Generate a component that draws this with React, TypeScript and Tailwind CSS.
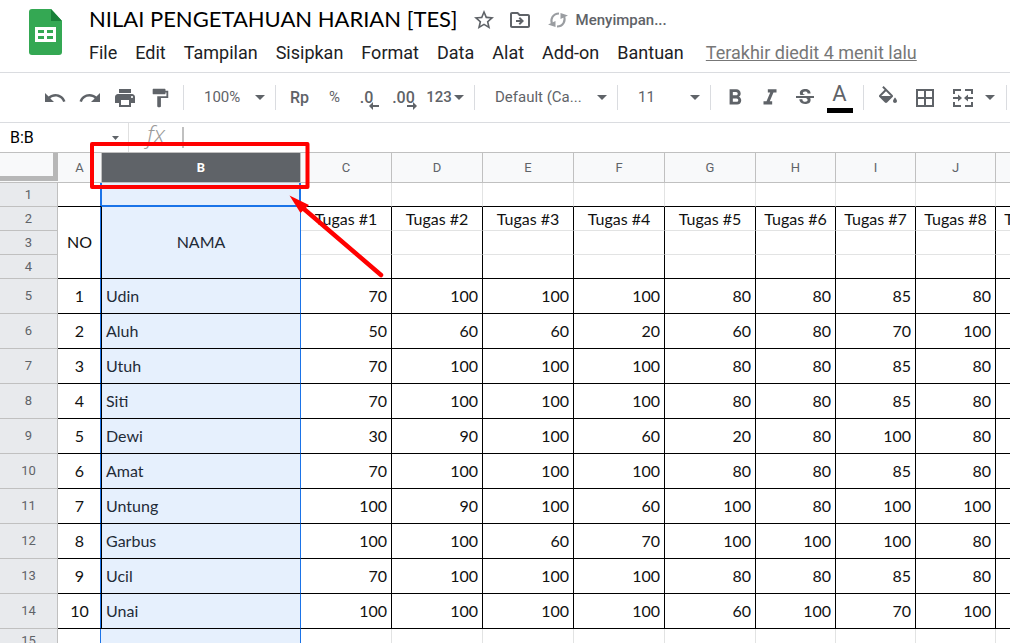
import { FC, ReactNode } from 'react';
import clsx from 'clsx';
import {
  MdFormatBold,
  MdFormatItalic,
  MdFormatPaint,
  MdOutlineDriveFileMove,
  MdPrint,
  MdRedo,
  MdStarBorder,
  MdStrikethroughS,
  MdUndo,
} from 'react-icons/md';

type Student = {
  name: string;
  scores: number[];
};

const menus = [
  'File',
  'Edit',
  'Tampilan',
  'Sisipkan',
  'Format',
  'Data',
  'Alat',
  'Add-on',
  'Bantuan',
];

const columns = ['C', 'D', 'E', 'F', 'G', 'H', 'I', 'J', ''];

const students: Student[] = [
  { name: 'Udin', scores: [70, 100, 100, 100, 80, 80, 85, 80] },
  { name: 'Aluh', scores: [50, 60, 60, 20, 60, 80, 70, 100] },
  { name: 'Utuh', scores: [70, 100, 100, 100, 80, 80, 85, 80] },
  { name: 'Siti', scores: [70, 100, 100, 100, 80, 80, 85, 80] },
  { name: 'Dewi', scores: [30, 90, 100, 60, 20, 80, 100, 80] },
  { name: 'Amat', scores: [70, 100, 100, 100, 80, 80, 85, 80] },
  { name: 'Untung', scores: [100, 90, 100, 60, 100, 80, 100, 100] },
  { name: 'Garbus', scores: [100, 100, 60, 70, 100, 100, 100, 80] },
  { name: 'Ucil', scores: [70, 100, 100, 100, 80, 80, 85, 80] },
  { name: 'Unai', scores: [100, 100, 100, 100, 60, 100, 70, 100] },
];

const SheetsLogo: FC = () => (
  <svg width="33" height="46" viewBox="0 0 33 46" aria-hidden="true">
    <path
      d="M3 0h19l11 12v31a3 3 0 0 1-3 3H3a3 3 0 0 1-3-3V3a3 3 0 0 1 3-3z"
      fill="#34a853"
    />
    <path d="M22 0l11 12H22z" fill="#188038" />
    <path
      d="M6 18h21v15H6zM9 21v3h6v-3zM18 21v3h6v-3zM9 27v3h6v-3zM18 27v3h6v-3z"
      fill="#fff"
      fillRule="evenodd"
    />
  </svg>
);

const SyncIcon: FC = () => (
  <svg width="20" height="20" viewBox="0 0 20 20" aria-hidden="true">
    <g fill="none" stroke="#9a9da1" strokeWidth="2">
      <path d="M4 14C2 9 5 3.500 11 3.500" />
      <path d="M16 6C18 11 15 16.500 9 16.500" />
    </g>
    <path d="M0 14.500L7.500 11v6zM20 5.500L12.500 9V3z" fill="#9a9da1" />
  </svg>
);

const FillIcon: FC = () => (
  <svg width="24" height="24" viewBox="0 0 24 24" aria-hidden="true">
    <path
      d="M16.560 8.940L7.620 0 6.210 1.410l2.380 2.380-5.150 5.150c-.59.59-.59 1.540 0 2.120l5.500 5.500c.29.29.68.44 1.060.44s.77-.15 1.060-.44l5.500-5.500c.59-.58.59-1.530 0-2.120zM5.210 10L10 5.210 14.790 10H5.210zM19 11.500s-2 2.170-2 3.500c0 1.100.9 2 2 2s2-.9 2-2c0-1.330-2-3.500-2-3.500z"
      fill="currentColor"
    />
  </svg>
);

const BordersIcon: FC = () => (
  <svg width="18" height="18" viewBox="0 0 18 18" aria-hidden="true">
    <path
      d="M1 1h16v16H1zM9 1v16M1 9h16"
      fill="none"
      stroke="currentColor"
      strokeWidth="2"
    />
  </svg>
);

const MergeIcon: FC = () => (
  <svg width="24" height="24" viewBox="0 0 24 24" aria-hidden="true">
    <path
      d="M3 8V4h7M14 4h7v4M3 16v4h7M14 20h7v-4M2 12h6M22 12h-6"
      fill="none"
      stroke="currentColor"
      strokeWidth="2"
    />
    <path d="M7 8.500l4 3.500-4 3.500zM17 8.500l-4 3.500 4 3.500z" fill="currentColor" />
  </svg>
);

const Caret: FC = () => (
  <svg width="10" height="5" viewBox="0 0 10 5" aria-hidden="true">
    <path d="M0 0h10L5 5z" fill="#5f6368" />
  </svg>
);

const Divider: FC = () => (
  <div className="mx-1.5 h-[25px] w-px shrink-0 bg-[#dadce0]" />
);

type ToolProps = {
  label: string;
  wide?: string;
  children: ReactNode;
};

const Tool: FC<ToolProps> = ({ label, wide = 'w-[35px]', children }) => (
  <button
    type="button"
    aria-label={label}
    className={clsx('flex h-9 shrink-0 items-center justify-center', wide)}
  >
    {children}
  </button>
);

type PickerProps = {
  label: string;
  value: string;
  wide: string;
};

const Picker: FC<PickerProps> = ({ label, value, wide }) => (
  <div className={clsx('relative flex h-9 shrink-0 items-center', wide)}>
    <select
      aria-label={label}
      className="h-full w-full appearance-none bg-transparent pr-6 pl-3.5"
    >
      <option>{value}</option>
    </select>
    <span className="pointer-events-none absolute right-1">
      <Caret />
    </span>
  </div>
);

const Header: FC = () => (
  <header className="flex shrink-0 gap-[27px] border-b border-[#dadce0] pb-2 pl-[29px]">
    <div className="pt-[9px]">
      <SheetsLogo />
    </div>
    <div>
      <div className="flex h-10 items-center text-[#5f6368]">
        <h1 className="mr-3.5 pb-1 font-['Lato',sans-serif] text-[22px] whitespace-nowrap text-black">
          NILAI PENGETAHUAN HARIAN [TES]
        </h1>
        <button type="button" aria-label="Bintangi" className="mr-3">
          <MdStarBorder size={24} />
        </button>
        <button type="button" aria-label="Pindahkan" className="mr-4">
          <MdOutlineDriveFileMove size={24} />
        </button>
        <SyncIcon />
        <span className="ml-2 text-[15px] font-medium">Menyimpan...</span>
      </div>
      <nav className="flex h-6 items-center gap-[18px] text-[18px] whitespace-nowrap text-[#202124]">
        {menus.map((menu) => (
          <button key={menu} type="button">
            {menu}
          </button>
        ))}
        <a href="#riwayat" className="ml-1 text-[#777] underline">
          Terakhir diedit 4 menit lalu
        </a>
      </nav>
    </div>
  </header>
);

const Toolbar: FC = () => (
  <div className="flex h-[50px] shrink-0 items-center overflow-hidden border-b border-[#dadce0] pl-[37px] text-[15px] text-[#5f6368]">
    <Tool label="Urungkan">
      <MdUndo size={24} />
    </Tool>
    <Tool label="Ulangi">
      <MdRedo size={24} />
    </Tool>
    <Tool label="Cetak">
      <MdPrint size={24} />
    </Tool>
    <Tool label="Format cat">
      <MdFormatPaint size={22} />
    </Tool>
    <Divider />
    <Picker label="Zoom" value="100%" wide="w-[79px]" />
    <Divider />
    <Tool label="Mata uang">
      <span className="text-base font-medium">Rp</span>
    </Tool>
    <Tool label="Persen">%</Tool>
    <Tool label="Kurangi desimal">
      <span className="text-base font-medium">.0</span>
      <svg width="10" height="8" viewBox="0 0 10 8" className="-ml-1 mt-4" aria-hidden="true">
        <path d="M10 3v2H4v3L0 4l4-4v3z" fill="#5f6368" />
      </svg>
    </Tool>
    <Tool label="Tambah desimal">
      <span className="text-base font-medium">.00</span>
      <svg width="10" height="8" viewBox="0 0 10 8" className="-ml-2 mt-4" aria-hidden="true">
        <path d="M0 3v2h6v3l4-4-4-4v3z" fill="#5f6368" />
      </svg>
    </Tool>
    <Tool label="Format lainnya" wide="w-[46px] gap-0.5 font-medium">
      123
      <Caret />
    </Tool>
    <Divider />
    <Picker label="Font" value="Default (Ca..." wide="w-[130px]" />
    <Divider />
    <Picker label="Ukuran font" value="11" wide="w-20" />
    <Divider />
    <Tool label="Tebal">
      <MdFormatBold size={26} />
    </Tool>
    <Tool label="Miring">
      <MdFormatItalic size={26} />
    </Tool>
    <Tool label="Coret">
      <MdStrikethroughS size={24} />
    </Tool>
    <Tool label="Warna teks" wide="w-[35px] flex-col gap-0.5">
      <span className="text-[22px] leading-6">A</span>
      <span className="h-[5px] w-[26px] bg-black" />
    </Tool>
    <Divider />
    <Tool label="Warna isian">
      <FillIcon />
    </Tool>
    <Tool label="Batas" wide="w-10">
      <BordersIcon />
    </Tool>
    <Tool label="Gabungkan sel" wide="w-[55px] gap-2.5">
      <MergeIcon />
      <Caret />
    </Tool>
    <Divider />
  </div>
);

const FormulaBar: FC = () => (
  <div className="flex h-[29px] shrink-0 items-center">
    <input
      aria-label="Kotak nama"
      defaultValue="B:B"
      className="w-[112px] pl-2.5 text-base text-black outline-none"
    />
    <svg width="7" height="4" viewBox="0 0 7 4" aria-hidden="true">
      <path d="M0 0h7L3.500 4z" fill="#5f6368" />
    </svg>
    <div className="ml-[9px] h-full w-px bg-[#e0e0e0]" />
    <label
      htmlFor="formula"
      className="w-[53px] pb-2 pl-[18px] font-['Open_Sans',sans-serif] text-[24px] leading-6 font-light text-[#999] italic"
    >
      fx
    </label>
    <input
      id="formula"
      className="h-[21px] min-w-0 flex-1 border-l-2 border-[#c0c0c0] outline-none"
    />
  </div>
);

type RowHeadProps = {
  children: ReactNode;
};

const RowHead: FC<RowHeadProps> = ({ children }) => (
  <th
    scope="row"
    className="border-r border-b border-[#c0c0c0] bg-[#e8eaed] font-['Roboto',sans-serif] text-[13px] font-normal text-[#5f6368]"
  >
    {children}
  </th>
);

// blue edge of the selected column drawn next to the cell border
const selectionEdge = 'shadow-[inset_-1px_0_0_#1a73e8]';

const Sheet: FC = () => (
  <div className="min-h-0 flex-1 overflow-hidden">
    <table className="w-[1076px] table-fixed border-separate border-spacing-0 border-t border-[#c0c0c0] font-['Lato',sans-serif] text-[16px] leading-5 text-[#111]">
      <colgroup>
        <col className="w-[58px]" />
        <col className="w-11" />
        <col className="w-[199px]" />
        <col className="w-[91px]" />
        <col className="w-[91px]" />
        <col className="w-[91px]" />
        <col className="w-[91px]" />
        <col className="w-[91px]" />
        <col className="w-20" />
        <col className="w-20" />
        <col className="w-20" />
        <col className="w-20" />
      </colgroup>
      <thead className="font-['Roboto',sans-serif] text-[13px] text-[#5f6368]">
        <tr className="h-[30px]">
          <td className="border-b border-[#c0c0c0] bg-[#f8f9fa] p-0 align-top">
            <div className="h-7 border-r-[5px] border-b-[5px] border-[#b7b7b7]" />
          </td>
          <th className="border-r border-b border-[#c0c0c0] bg-[#f8f9fa] font-normal">
            A
          </th>
          <th className="border-r border-b border-[#c0c0c0] bg-[#5f6368] font-bold text-white">
            B
          </th>
          {columns.map((column, index) => (
            <th
              key={index}
              className="border-r border-b border-[#c0c0c0] bg-[#f8f9fa] font-normal"
            >
              {column}
            </th>
          ))}
        </tr>
      </thead>
      <tbody>
        <tr className="h-6">
          <RowHead>1</RowHead>
          <td className="border-r border-b border-r-[#1a73e8] border-b-black shadow-[inset_-1px_0_0_#1a73e8]" />
          <td className="border-r border-b border-[#1a73e8] bg-[#e6f0fd] shadow-[inset_-1px_-1px_0_#1a73e8]" />
          {columns.map((_, index) => (
            <td
              key={index}
              className="border-r border-b border-r-[#e2e3e3] border-b-black"
            />
          ))}
        </tr>
        <tr className="h-6">
          <RowHead>2</RowHead>
          <td
            rowSpan={3}
            className={clsx(
              'border-r border-b border-black p-0 pb-0.5 text-center',
              selectionEdge
            )}
          >
            NO
          </td>
          <td
            rowSpan={3}
            className="border-r border-b border-r-[#1a73e8] border-b-black bg-[#e6f0fd] p-0 pb-0.5 text-center text-[#1f2b38]"
          >
            NAMA
          </td>
          {columns.map((_, index) => (
            <td
              key={index}
              className="border-r border-b border-r-black border-b-[#e2e3e3] p-0 text-center whitespace-nowrap"
            >
              Tugas #{index + 1}
            </td>
          ))}
        </tr>
        <tr className="h-6">
          <RowHead>3</RowHead>
          {columns.map((_, index) => (
            <td
              key={index}
              className="border-r border-b border-r-black border-b-[#e2e3e3]"
            />
          ))}
        </tr>
        <tr className="h-6">
          <RowHead>4</RowHead>
          {columns.map((_, index) => (
            <td key={index} className="border-r border-b border-black" />
          ))}
        </tr>
        {students.map((student, row) => (
          <tr key={student.name} className="h-[35px]">
            <RowHead>{row + 5}</RowHead>
            <td
              className={clsx(
                'border-r border-b border-black p-0 text-center',
                selectionEdge
              )}
            >
              {row + 1}
            </td>
            <td className="border-r border-b border-r-[#1a73e8] border-b-black bg-[#e6f0fd] p-0 pl-1 text-[#1f2b38]">
              {student.name}
            </td>
            {columns.map((_, index) => (
              <td
                key={index}
                className="border-r border-b border-black p-0 pr-1 text-right"
              >
                {student.scores[index]}
              </td>
            ))}
          </tr>
        ))}
        <tr className="h-6">
          <RowHead>15</RowHead>
          <td
            className={clsx('border-r border-b border-r-[#e6f0fd] border-b-[#e2e3e3]', selectionEdge)}
          />
          <td className="border-r border-b border-r-[#1a73e8] border-b-[#e2e3e3] bg-[#e6f0fd]" />
          {columns.map((_, index) => (
            <td key={index} className="border-r border-b border-[#e2e3e3]" />
          ))}
        </tr>
      </tbody>
    </table>
  </div>
);

// red frame and arrow that point at the header of column B
const Annotation: FC = () => (
  <svg
    width="310"
    height="150"
    viewBox="0 0 310 150"
    className="pointer-events-none absolute top-[140px] left-[88px]"
    aria-hidden="true"
  >
    <rect
      x="4"
      y="4"
      width="215.500"
      height="43"
      fill="none"
      stroke="#f00"
      strokeWidth="4"
      strokeLinejoin="round"
    />
    <path d="M293 135L216 69" stroke="#f00" strokeWidth="4.500" strokeLinecap="round" />
    <path d="M201.500 55.500L221 65L212.500 73z" fill="#f00" />
  </svg>
);

const App: FC = () => {
  return (
    <div className="relative flex h-screen flex-col overflow-hidden bg-white font-['Roboto',sans-serif]">
      <Header />
      <Toolbar />
      <FormulaBar />
      <Sheet />
      <Annotation />
    </div>
  );
};

export default App;
